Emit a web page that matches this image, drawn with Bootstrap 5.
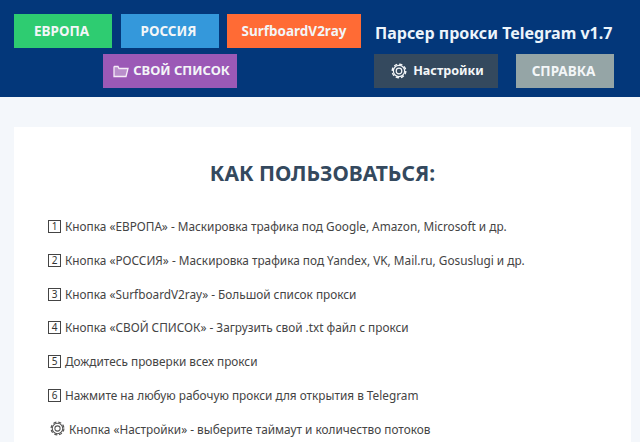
<!DOCTYPE html>
<html lang="ru"><head><meta charset="utf-8"><title>Парсер прокси Telegram</title>
<link href="https://cdn.jsdelivr.net/npm/bootstrap@5.3.0/dist/css/bootstrap.min.css" rel="stylesheet">
<style>
html,body{height:442px;overflow:hidden}
body{background:#f4f7fb;font-family:"Noto Sans","Open Sans",sans-serif;color:#2c3e50}
.top-band{background:#03377a;height:97px;padding:14px 14px 0}
.top-row{height:34px;margin-bottom:6px}
.act{height:34px;border:0;border-radius:0;color:#f3f6f8;font-size:13.5px;font-weight:700;padding:0 3px 0 0;display:flex;align-items:center;justify-content:center;gap:4px;white-space:nowrap}
.act:hover{color:#f3f6f8}
.w98{width:98px}.w134{width:134px}.w124{width:124px}
.c-green{background:#2ecc71}.c-blue{background:#3498db}.c-orange{background:#ff6b35;padding-right:0}.c-purple{background:#9b59b6;font-size:13px;padding-left:3px;padding-right:0}.c-dark{background:#34495e;font-size:12.6px;padding-left:3px;padding-right:0;gap:6px}.c-grey{background:#95a5a6}
.s1{margin-left:9px}.s2{margin-left:8px}.s3{margin-left:89px}.s4{margin-left:137px}.s5{margin-left:18px}
.app-title{color:#ecf4fb;font-size:16px;font-weight:700;margin:11px 0 0 14px;white-space:nowrap;line-height:16px}
.sheet{background:#fff;margin:30px 9px 0 14px;height:330px;padding-top:31px}
.sheet h1{font-size:21px;font-weight:700;color:#34495e;text-align:center;margin:0 0 29px;line-height:30px}
.steps{padding-left:34px;margin:0;list-style:none;font-size:11.8px;color:#444}
.steps li{height:33.8px;display:flex;align-items:flex-start;line-height:18px;white-space:nowrap}
.kbox{width:13px;height:13px;border:1px solid #444;margin:3px 4px 0 0;font-size:10px;line-height:11px;text-align:center;flex:none;color:#333}
.gear-i{margin:1px 4px 0 2px;flex:none}
</style></head><body>
<header class="top-band">
<div class="d-flex top-row">
<button class="btn act w98 c-green">ЕВРОПА</button>
<button class="btn act w98 c-blue s1">РОССИЯ</button>
<button class="btn act w134 c-orange s2">SurfboardV2ray</button>
<div class="app-title">Парсер прокси Telegram v1.7</div>
</div>
<div class="d-flex top-row">
<button class="btn act w134 c-purple s3"><svg width="16" height="14" viewBox="0 0 16 14" fill="#b98fcb" stroke="#f5ecf7" stroke-width="1.300"><path d="M1 3V12.500H13L15 4.500H6L5 2.500H1.500Z"/></svg>СВОЙ СПИСОК</button>
<button class="btn act w124 c-dark s4"><svg width="16" height="16" viewBox="0 0 16 16" fill="none" stroke="#f3f6f8"><circle cx="8" cy="8" r="5.600" stroke-width="1.200"/><circle cx="8" cy="8" r="6.800" stroke-width="1.400" stroke-dasharray="3.300 2.040"/><circle cx="8" cy="8" r="2.800" stroke-width="1.200"/></svg>Настройки</button>
<button class="btn act w98 c-grey s5">СПРАВКА</button>
</div>
</header>
<main class="sheet">
<h1>КАК ПОЛЬЗОВАТЬСЯ:</h1>
<ul class="steps">
<li><span class="kbox">1</span>Кнопка «ЕВРОПА» - Маскировка трафика под Google, Amazon, Microsoft и др.</li>
<li><span class="kbox">2</span>Кнопка «РОССИЯ» - Маскировка трафика под Yandex, VK, Mail.ru, Gosuslugi и др.</li>
<li><span class="kbox">3</span>Кнопка «SurfboardV2ray» - Большой список прокси</li>
<li><span class="kbox">4</span>Кнопка «СВОЙ СПИСОК» - Загрузить свой .txt файл с прокси</li>
<li><span class="kbox">5</span>Дождитесь проверки всех прокси</li>
<li><span class="kbox">6</span>Нажмите на любую рабочую прокси для открытия в Telegram</li>
<li><svg class="gear-i" width="15" height="15" viewBox="0 0 16 16" fill="none" stroke="#555"><circle cx="8" cy="8" r="5.600" stroke-width="1.100"/><circle cx="8" cy="8" r="6.800" stroke-width="1.300" stroke-dasharray="3.300 2.040"/><circle cx="8" cy="8" r="2.800" stroke-width="1.100"/></svg>Кнопка «Настройки» - выберите таймаут и количество потоков</li>
</ul>
</main>
<script src="https://cdn.jsdelivr.net/npm/bootstrap@5.3.0/dist/js/bootstrap.bundle.min.js"></script>
</body></html>
